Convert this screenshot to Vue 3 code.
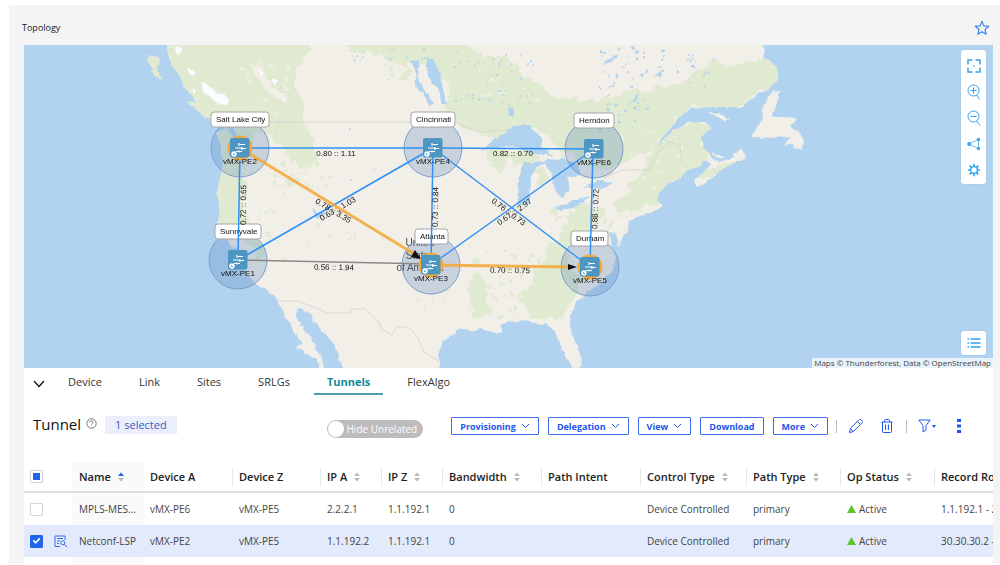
<script setup>
import { ref } from 'vue'

const tabs = ['Device', 'Link', 'Sites', 'SRLGs', 'Tunnels', 'FlexAlgo']
const activeTab = ref('Tunnels')
const hideUnrelated = ref(false)

const nodes = [
  { id: 'vMX-PE2', city: 'Salt Lake City', x: 240, y: 148, bx: 211, by: 112, bw: 58, hot: true },
  { id: 'vMX-PE4', city: 'Cincinnati', x: 433, y: 148, bx: 411, by: 112, bw: 44, hot: false },
  { id: 'vMX-PE6', city: 'Herndon', x: 594, y: 149, bx: 574, by: 113, bw: 40, hot: false },
  { id: 'vMX-PE1', city: 'Sunnyvale', x: 238, y: 260, bx: 215, by: 224, bw: 46, hot: false },
  { id: 'vMX-PE3', city: 'Atlanta', x: 431, y: 265, bx: 415, by: 229, bw: 33, hot: true },
  { id: 'vMX-PE5', city: 'Durham', x: 590, y: 267, bx: 571, by: 231, bw: 37, hot: true }
]

const links = [
  [240, 148, 433, 148], [433, 148, 594, 149], [240, 148, 238, 260], [238, 260, 433, 148],
  [433, 148, 431, 265], [433, 148, 590, 267], [431, 265, 594, 149], [593, 149, 590, 267]
]

const metrics = [
  { t: '0.80 :: 1.11', x: 336, y: 156, r: 0 },
  { t: '0.82 :: 0.70', x: 513, y: 156, r: 0 },
  { t: '0.56 :: 1.94', x: 334, y: 270, r: 1 },
  { t: '0.70 :: 0.75', x: 510, y: 273, r: 1 },
  { t: '0.72 :: 0.65', x: 246, y: 205, r: -89 },
  { t: '0.73 :: 0.84', x: 438, y: 207, r: -89 },
  { t: '0.88 :: 0.72', x: 598, y: 209, r: -88 },
  { t: '0.78 :: 3.35', x: 332, y: 213, r: 31 },
  { t: '0.63 :: 1.03', x: 339, y: 211, r: -30 },
  { t: '0.76 :: 0.73', x: 507, y: 214, r: 37 },
  { t: '0.67 :: 2.97', x: 516, y: 214, r: -35 }
]

// Small lakes and forest patches, scattered with a fixed seed
function scatter(seed, count, x0, y0, x1, y1, max) {
  let s = seed
  const next = () => {
    s = (s * 16807) % 2147483647
    return s / 2147483647
  }
  return Array.from({ length: count }, () => ({
    x: Math.round(x0 + next() * (x1 - x0)),
    y: Math.round(y0 + next() * (y1 - y0)),
    rx: (0.4 + next() * max).toFixed(1),
    ry: (0.4 + next() * max * 0.6).toFixed(1),
    a: Math.round(next() * 180)
  }))
}
const lakes = [
  ...scatter(71, 50, 455, 48, 535, 105, 1.2),
  ...scatter(913, 60, 600, 48, 715, 88, 2),
  ...scatter(37, 30, 600, 95, 655, 135, 1.5),
  ...scatter(55, 16, 350, 48, 425, 62, 1.2),
  ...scatter(85, 10, 275, 120, 400, 180, 1)
]
const groves = [
  ...scatter(17, 34, 240, 160, 290, 260, 2.5),
  ...scatter(29, 40, 275, 150, 345, 190, 3),
  ...scatter(43, 22, 310, 220, 385, 255, 2.5),
  ...scatter(23, 14, 360, 285, 465, 310, 2),
  ...scatter(7, 70, 470, 245, 570, 318, 4),
  ...scatter(97, 34, 550, 200, 640, 245, 4),
  ...scatter(61, 18, 385, 65, 430, 80, 3)
]
const clearings = [
  ...scatter(15, 40, 235, 60, 290, 130, 2.5),
  ...scatter(19, 30, 470, 60, 540, 100, 2),
  ...scatter(33, 30, 620, 130, 700, 190, 2)
]

const actions = [
  { label: 'Provisioning', menu: true },
  { label: 'Delegation', menu: true },
  { label: 'View', menu: true },
  { label: 'Download', menu: false },
  { label: 'More', menu: true }
]

const columns = [
  { label: 'Name', sort: 'asc', cls: 'name' },
  { label: 'Device A', cls: 'dev plain' },
  { label: 'Device Z', cls: 'dev' },
  { label: 'IP A', sort: 'none', cls: 'ip' },
  { label: 'IP Z', sort: 'none', cls: 'ip' },
  { label: 'Bandwidth', sort: 'none', cls: 'wide' },
  { label: 'Path Intent', cls: 'wide' },
  { label: 'Control Type', sort: 'none', cls: 'control' },
  { label: 'Path Type', sort: 'none', cls: 'type' },
  { label: 'Op Status', sort: 'none', cls: 'type' },
  { label: 'Record Route', cls: 'record' }
]

const rows = ref([
  { on: false, cells: ['MPLS-MES...', 'vMX-PE6', 'vMX-PE5', '2.2.2.1', '1.1.192.1', '0', '', 'Device Controlled', 'primary', 'Active', '1.1.192.1 - 2.2.2.1'] },
  { on: true, cells: ['Netconf-LSP', 'vMX-PE2', 'vMX-PE5', '1.1.192.2', '1.1.192.1', '0', '', 'Device Controlled', 'primary', 'Active', '30.30.30.2 - 1.1.192.1'] }
])
</script>

<template>
  <main class="page">
    <header class="head">
      <h1>Topology</h1>
      <button class="bare" aria-label="Favorite">
        <svg width="16" height="16" viewBox="0 0 16 16"><path d="M8 1.200L9.900 5.900 14.800 6.300 11 9.500 12.200 14.300 8 11.700 3.800 14.300 5 9.500 1.200 6.300 6.100 5.900Z" fill="none" stroke="#2d83f0" stroke-width="1.1" stroke-linejoin="round" /></svg>
      </button>
    </header>

    <section class="map" aria-label="Network map">
      <svg class="chart" viewBox="24 45 969 323">
        <defs>
          <filter id="rough" x="-5%" y="-5%" width="110%" height="110%">
            <feTurbulence type="fractalNoise" baseFrequency="0.14" numOctaves="3" seed="4" />
            <feDisplacementMap in="SourceGraphic" scale="5" xChannelSelector="R" yChannelSelector="G" />
          </filter>
          <filter id="rougher" x="-5%" y="-5%" width="110%" height="110%">
            <feTurbulence type="fractalNoise" baseFrequency="0.09" numOctaves="4" seed="9" />
            <feDisplacementMap in="SourceGraphic" scale="16" xChannelSelector="R" yChannelSelector="G" />
          </filter>
          <path id="continent" d="M166 36L168 54 172 66 179 75 185 88 194 98 201 107 212 115 220 122 226 130 217 133 222 150 223 163 220 180 218 197 220 213 219 222 224 234 231 246 238 260 247 273 253 283 263 287 273 295 278 302 283 313 290 323 294 333 303 342 297 348 307 353 317 360 322 376H325L322 358 315 348 312 338 303 328 296 316 297 309 309 312 314 323 325 333 334 345 339 358 347 376H442L438 353 441 343 449 338 460 328 470 331 480 328 490 332 503 333 500 326 507 322 527 320 537 325 547 323 555 333 560 341 562 350 568 359 572 369H580L581 358 577 346 571 333 570 320 573 307 583 295 597 287 605 277 612 272 616 257 612 247 610 233 614 231 618 247 623 237 629 227 630 220 643 215 660 208 663 207 657 200 659 193 667 185 680 178 687 170 700 167 704 160 712 164 703 172 694 180 697 187 706 182 718 172 733 163 745 158 741 148 733 157 717 163 710 155 703 147 701 137 710 128 705 122 687 123 671 133 658 147 661 139 677 120 690 108 713 107 743 107 753 97 767 90 778 80 777 67 763 57 765 48 752 36H562V45L563 70 570 87 580 95 589 91 592 77 590 63 588 36Z" />
          <clipPath id="onland"><use href="#continent" /></clipPath>
        </defs>
        <rect x="24" y="45" width="969" height="323" fill="#b1d3f0" />
        <g filter="url(#rough)" fill="#f2efe9">
          <use href="#continent" />
          <path d="M780 92L773 90 763 107 762 118 752 137 776 138 790 136 784 146 792 143 794 147 802 150 804 142 800 132 790 127 796 119 784 117 772 117 776 106Z" />
          <path d="M708 112L719 113 730 120 722 120ZM711 151L718 156 726 156 717 159Z" />
          <path d="M187 100L200 103 213 113 219 124 207 119 197 111Z" fill="#dfead0" />
          <path d="M147 55L160 57 157 67 164 82 155 76 150 66Z" fill="#dfead0" />
        </g>
        <g clip-path="url(#onland)">
          <g fill="#dfead0" filter="url(#rougher)">
            <path d="M160 30H318L298 66 293 88 304 104 302 124 314 140 318 160 302 170 288 156 270 136 256 132 246 156 240 200 250 224 266 252 258 258 244 238 230 225 212 226 208 132 185 105Z" />
            <path d="M335 30H425L450 36 480 54 510 60 535 84 560 98 600 100 640 90 680 84 712 62 740 66 770 52 784 80 755 97 740 108 692 108 664 138 645 152 618 166 600 170 560 150 540 130 512 128 500 140 470 130 448 114 446 82 425 62 398 64 382 56 352 50Z" />
            <path d="M658 130L690 120 715 128 702 145 710 164 690 172 668 185 657 202 635 212 610 212 625 192 645 170ZM696 178L722 164 747 155 712 178ZM488 148L540 154 528 166 510 158 500 172 486 160ZM534 170L544 166 550 182 538 184Z" />
            <path d="M548 250L580 205 606 208 586 236 566 258 584 280 572 300 560 318 530 318 520 300 535 275ZM470 274L485 276 484 300 492 314 475 318Z" />
          </g>
          <g fill="#dfead0" filter="url(#rough)">
            <ellipse v-for="(g, i) in groves" :key="i" :cx="g.x" :cy="g.y" :rx="g.rx" :ry="g.ry" :transform="`rotate(${g.a} ${g.x} ${g.y})`" />
          </g>
          <g fill="#f2efe9" filter="url(#rough)">
            <ellipse v-for="(g, i) in clearings" :key="i" :cx="g.x" :cy="g.y" :rx="g.rx" :ry="g.ry" :transform="`rotate(${g.a} ${g.x} ${g.y})`" />
            <path d="M250 64L262 68 272 86 284 94 288 104 276 98 266 90 256 76Z" />
          </g>
          <g fill="#fafcff" filter="url(#rough)">
            <path d="M174 46L182 48 181 54 177 53ZM188 68L196 72 194 76 189 74ZM202 82L210 86 214 92 222 94 229 99 227 105 217 103 208 96 203 92ZM258 70L263 74 261 77ZM270 80L277 80 275 84ZM192 88L196 91 194 94Z" />
          </g>
        </g>
        <path d="M270 122H455M278 301L298 301 328 313H350L351 309H365L378 321 382 329 392 335 397 327H408L416 335 424 352 440 362M455 122L466 127 480 132 492 131 510 130 530 142M604 178L622 170H650L658 152 670 142 680 146 682 162 687 167" fill="none" stroke="#dad5d1" />
        <g fill="#b1d3f0" filter="url(#rough)">
          <path d="M482 150L492 141 503 134 512 126 530 125 540 137 543 147 553 156 534 154 520 149 508 145 498 148Z" />
          <path d="M517 206L518 179 524 163 551 161 536 168 530 181 529 203Z" />
          <path d="M545 160L565 158 578 165 581 175 566 177 570 190 562 199 555 190 551 174Z" />
          <path d="M555 207L567 203 592 195 577 206 561 211ZM583 188L597 181 613 182 604 188Z" />
          <path d="M426 57L434 59 441 74 442 84 446 104 441 104 440 92 430 80 426 66ZM411 60L419 62 418 78 424 88 434 104 430 107 424 94 415 86 417 76Z" />
          <path d="M312 207L318 212 326 214 321 218 315 216ZM508 106L514 108 514 116 509 116ZM630 104L640 92 638 100ZM652 76L664 70 662 76ZM602 62L622 54 608 64Z" />
          <path d="M228 120L234 128 238 140 233 136 226 126ZM228 246L236 248 240 253 232 252ZM610 232L614 238 613 248Z" />
        </g>
        <path d="M566 70L575 69 576 72 569 74Z" fill="#f2efe9" />
        <g fill="#b1d3f0">
          <ellipse v-for="(l, i) in lakes" :key="i" :cx="l.x" :cy="l.y" :rx="l.rx" :ry="l.ry" :transform="`rotate(${l.a} ${l.x} ${l.y})`" />
        </g>

        <g class="country" text-anchor="middle">
          <text x="420" y="246">United</text>
          <text x="420" y="259">States</text>
          <text x="420" y="271">of America</text>
        </g>

        <g v-for="n in nodes" :key="n.id">
          <circle :cx="n.x" :cy="n.y" r="29" fill="#4a7db8" fill-opacity=".25" stroke="#7e9dc7" stroke-width="1" />
          <rect :x="n.bx" :y="n.by" :width="n.bw" height="15" rx="3" fill="#fff" stroke="#a6a6a6" stroke-width="1" />
          <text class="city" :x="n.bx + 5" :y="n.by + 10">{{ n.city }}</text>
        </g>

        <line x1="238" y1="260" x2="431" y2="264" stroke="#8b8785" stroke-width="1.3" />
        <line v-for="(l, i) in links" :key="i" :x1="l[0]" :y1="l[1]" :x2="l[2]" :y2="l[3]" stroke="#2f90f5" stroke-width="1.5" />
        <g class="metric" text-anchor="middle">
          <text v-for="m in metrics" :key="m.t" :x="m.x" :y="m.y" :transform="`rotate(${m.r} ${m.x} ${m.y})`">{{ m.t }}</text>
        </g>
        <g stroke="#f4a93a" stroke-opacity=".88" stroke-width="3">
          <line x1="240" y1="148" x2="416" y2="255" />
          <line x1="431" y1="265" x2="570" y2="267" />
        </g>
        <path d="M421 259L411 257 415 250ZM577 267L568 264V270Z" fill="#111" />

        <g v-for="n in nodes" :key="n.city">
          <circle v-if="n.hot" :cx="n.x" :cy="n.y" r="12.5" fill="#f2a93c" />
          <g :transform="`translate(${n.x} ${n.y})`">
            <rect x="-10" y="-10" width="19.5" height="19.5" rx="2" fill="#4c96c1" />
            <path d="M-5 0H2M0 -3.500H5M-4 3.500H2M1 .5H6M-1 -5V-2M2 -1V2M-1 2.500V4.500" fill="none" stroke="#fff" stroke-width="1.200" />
            <circle cx="-6" cy="6" r="2.700" fill="#fff" />
            <path d="M-6.500 5V6.500H-5" fill="none" stroke="#4c96c1" stroke-width=".8" />
          </g>
          <text class="metric" text-anchor="middle" :x="n.x" :y="n.y + 16">{{ n.id }}</text>
        </g>
      </svg>

      <nav class="tools" aria-label="Map tools">
        <button class="bare" aria-label="Fit to screen">
          <svg width="14" height="14" viewBox="0 0 14 14"><path d="M1 5.500V1H5.500M8.500 1H13V5.500M13 8.500V13H8.500M5.500 13H1V8.500" stroke-width="1.500" /><circle cx="7" cy="7" r=".8" fill="#31a2ee" stroke="none" /></svg>
        </button>
        <button class="bare" aria-label="Zoom in">
          <svg width="14" height="16" viewBox="0 0 14 16"><circle cx="6.500" cy="6.500" r="5.500" /><path d="M3.500 6.500H9.500M6.500 3.500V9.500M9.500 11L13 15.500" /></svg>
        </button>
        <button class="bare" aria-label="Zoom out">
          <svg width="14" height="16" viewBox="0 0 14 16"><circle cx="6.500" cy="6.500" r="5.500" /><path d="M3.500 6.500H9.500M9.500 11L13 15.500" /></svg>
        </button>
        <button class="bare" aria-label="Layout">
          <svg width="14" height="14" viewBox="0 0 14 14"><path d="M2 7L11.500 2.500V11.500Z" stroke-width=".7" /><g fill="#31a2ee" stroke="none"><circle cx="2.200" cy="7" r="2" /><circle cx="11.500" cy="2.500" r="1.700" /><circle cx="11.500" cy="11.500" r="1.700" /></g></svg>
        </button>
        <button class="bare" aria-label="Map settings">
          <svg width="14" height="14" viewBox="0 0 14 14"><circle cx="7" cy="7" r="3.400" stroke-width="1.400" /><path d="M7 .8V3.500M7 10.500V13.200M.8 7H3.500M10.500 7H13.200M2.600 2.600L4.500 4.500M9.500 9.500L11.400 11.400M2.600 11.400L4.500 9.500M9.500 4.500L11.400 2.600" stroke-width="1.700" /></svg>
        </button>
      </nav>
      <button class="bare legend" aria-label="Legend">
        <svg width="14" height="12" viewBox="0 0 14 12"><path d="M3.500 2H13.500M3.500 6H13.500M3.500 10H13.500M.5 2H2M.5 6H2M.5 10H2" stroke-width="1.300" /></svg>
      </button>
      <p class="credit">Maps © Thunderforest, Data © OpenStreetMap</p>
    </section>

    <section class="panel">
      <nav class="tabs">
        <button class="bare collapse" aria-label="Collapse panel">
          <svg width="12" height="8" viewBox="0 0 12 8"><path d="M1 1L6 6.500 11 1" fill="none" stroke="#111" stroke-width="1.300" /></svg>
        </button>
        <button v-for="t in tabs" :key="t" class="bare tab" :class="{ active: t === activeTab }" @click="activeTab = t">{{ t }}</button>
      </nav>

      <div class="bar">
        <div class="heading">
          <h2>Tunnel</h2>
          <svg class="help" width="11" height="11" viewBox="0 0 11 11"><circle cx="5.500" cy="5.500" r="4.700" /><path d="M4 4.300C4 2.300 7 2.400 7 4.200 7 5.300 5.500 5.200 5.500 6.500M5.500 7.500V8.300" /></svg>
          <span class="badge">1 selected</span>
        </div>
        <label class="switch"><input v-model="hideUnrelated" type="checkbox" role="switch"><span>Hide Unrelated</span></label>
        <div class="actions">
          <button v-for="a in actions" :key="a.label" class="action">
            {{ a.label }}
            <svg v-if="a.menu" width="9" height="6" viewBox="0 0 9 6"><path d="M1 1L4.500 4.500 8 1" /></svg>
          </button>
        </div>
        <i class="rule"></i>
        <button class="bare" aria-label="Edit">
          <svg width="16" height="16" viewBox="0 0 16 16"><path d="M1.500 14.500L2.300 10.500 10.800 2C12.500.4 15.500 3.300 13.900 5L5.300 13.600ZM9.300 3.500L12.300 6.500M2.500 10.500L5.300 13.500" /></svg>
        </button>
        <button class="bare trash" aria-label="Delete">
          <svg width="12" height="16" viewBox="0 0 12 16"><path d="M.5 4H11.500M1.500 4V13.500Q1.500 14.500 2.500 14.500H9.500Q10.500 14.500 10.500 13.500V4M3.500 4V2.500Q3.500 1.500 4.500 1.500H7.500Q8.500 1.500 8.500 2.500V4M4.600 6.500V12M7.400 6.500V12" /></svg>
        </button>
        <i class="rule"></i>
        <button class="bare filter" aria-label="Filter">
          <svg width="18" height="14" viewBox="0 0 18 14"><path d="M.8 1H12.200L8 6.500V11L5 13V6.500Z" /><path d="M14 6H18L16 9Z" fill="#1d56ee" stroke="none" /></svg>
        </button>
        <button class="bare dots" aria-label="More options">
          <svg width="4" height="16" viewBox="0 0 4 16"><path d="M0 1H4V4H0ZM0 6.500H4V9.500H0ZM0 12H4V15H0Z" fill="#1d56ee" stroke="none" /></svg>
        </button>
      </div>

      <div class="scroller">
        <table>
          <thead>
            <tr>
              <th class="pick"><input type="checkbox" :indeterminate="true" aria-label="Select all"></th>
              <th class="open"></th>
              <th v-for="c in columns" :key="c.label" :class="c.cls">
                <span class="title">{{ c.label }}
                  <button v-if="c.sort" class="bare" :aria-label="'Sort by ' + c.label">
                    <svg width="6" height="10" viewBox="0 0 6 10"><path d="M0 4L3 .5 6 4Z" :fill="c.sort === 'asc' ? '#1f66ee' : '#b9b9b9'" /><path d="M0 6L3 9.500 6 6Z" fill="#b9b9b9" /></svg>
                  </button>
                </span>
              </th>
            </tr>
          </thead>
          <tbody>
            <tr v-for="r in rows" :key="r.cells[0]" :class="{ on: r.on }">
              <td class="pick"><input v-model="r.on" type="checkbox" :aria-label="'Select ' + r.cells[0]"></td>
              <td class="open">
                <button v-if="r.on" class="bare" aria-label="Show details">
                  <svg width="14" height="13" viewBox="0 0 14 13"><path d="M6 11.500H1V1H11V5M3 3.500H9M3 6H6M3 8.500H5" /><circle cx="8.800" cy="7.800" r="2" /><path d="M10.300 9.300L13 12" /></svg>
                </button>
              </td>
              <td v-for="(c, i) in r.cells" :key="i" :class="columns[i].cls">
                <svg v-if="i === 9" class="up" width="9" height="8" viewBox="0 0 9 8"><path d="M0 8L4.500 0 9 8Z" fill="#5cc52d" /></svg>{{ c }}
              </td>
            </tr>
            <tr>
              <td class="pick"></td><td class="open"></td>
              <td v-for="c in columns" :key="c.label" :class="c.cls"></td>
            </tr>
          </tbody>
        </table>
      </div>
    </section>
  </main>
</template>

<style>
body { background: #fff; overflow: hidden; }
#app { padding: 5px 0 2px 9px; }
</style>

<style scoped>
.page {
  box-sizing: border-box;
  height: calc(100vh - 7px);
  overflow: hidden;
  padding: 0 7px 0 15px;
  background: #f4f4f4;
  font-family: "Open Sans", "Noto Sans", sans-serif;
  color: #222;
}
.bare { display: inline-flex; align-items: center; justify-content: center; padding: 0; border: 0; background: none; font: inherit; color: inherit; cursor: pointer; }
.head { display: flex; align-items: center; justify-content: space-between; height: 40px; padding: 2px 3px 0 0; margin-left: -2px; box-sizing: border-box; }
.head h1 { margin: 0; padding-top: 3px; font-size: 9px; font-weight: 400; }
.head .bare { padding-top: 3px; }

.map { position: relative; }
.chart { display: block; width: 100%; height: auto; font-family: "Liberation Sans", Arial, sans-serif; }
.city, .metric { font-size: 8px; fill: #111; }
.country { font-size: 10px; fill: #444; }
.tools, .legend { position: absolute; right: 7px; width: 25px; border-radius: 3px; background: #fff; box-shadow: 0 0 2px #8ba4bc66; }
.tools { top: 5px; box-sizing: border-box; padding: 3px 0 1px; display: grid; grid-auto-rows: 26px; }
.legend { bottom: 13px; height: 24px; }
.tools svg, .legend svg { fill: none; stroke: #31a2ee; }
.credit { position: absolute; right: 0; bottom: 0; margin: 0; padding: 0 2px; background: #ffffffb3; font-size: 8px; line-height: 10px; color: #444; }

.panel { background: #fff; }
.tabs { display: flex; align-items: center; gap: 11px; height: 27px; padding-left: 9px; }
.collapse { padding-top: 4px; }
.tab { height: 27px; box-sizing: border-box; padding: 2px 13px 0; border-bottom: 2px solid transparent; font-size: 11px; color: #333; }
.collapse + .tab { margin-left: -1px; }
.tab.active { border-bottom-color: #4b9fae; font-weight: 700; color: #128a9b; }

.bar { display: flex; align-items: center; height: 67px; padding: 0 32px 5px 9px; box-sizing: border-box; }
.bar svg { fill: none; stroke: #1d56ee; }
.heading { display: flex; align-items: center; margin-right: auto; padding-bottom: 3px; }
.bar h2 { margin: 0 5px 0 0; padding-bottom: 2px; font-size: 15px; font-weight: 500; color: #111; }
.bar .help { stroke: #555; stroke-width: .8; margin-bottom: 2px; }
.badge { margin-left: 8px; padding: 0 10px; background: #ebeffc; font-size: 11px; line-height: 18px; color: #3d5bc4; }
.switch { display: flex; align-items: center; gap: 3px; height: 18px; padding: 0 6px 0 1px; margin: 5px 28px 0 0; border-radius: 9px; background: #bcbcbc; box-sizing: border-box; font-size: 10px; font-weight: 500; color: #fff; }
.switch input { appearance: none; width: 16px; height: 16px; margin: 0; border-radius: 50%; background: #fff; }
.actions { display: flex; gap: 9px; margin-right: 8px; }
.action { display: flex; align-items: center; gap: 5px; height: 18px; padding: 0 8px; border: 1px solid #3f6df0; border-radius: 1px; background: #fff; font: 700 9px "Open Sans", sans-serif; color: #1d56ee; }
.rule { width: 1px; height: 13px; background: #bbb; }
.rule + .bare { margin-left: 11px; }
.bar .trash { margin: 0 13px 0 17px; }
.dots { margin-left: 21px; }

.scroller { overflow: hidden; }
table { width: 1030px; table-layout: fixed; border-collapse: separate; border-spacing: 0; font-size: 10px; color: #444; }
th, td { box-sizing: border-box; padding: 0 0 0 7px; text-align: left; white-space: nowrap; overflow: hidden; }
th { height: 31px; border-bottom: 2px solid #dedede; font-size: 11px; font-weight: 600; color: #222; }
td { height: 32px; }
.pick { width: 24px; padding-left: 6px; }
.open { width: 24px; padding-left: 6px; }
.name { width: 72px; background: #fafafa; }
.dev { width: 88px; }
.ip { width: 61px; }
.wide { width: 99px; }
.control { width: 106px; }
.type { width: 94px; }
.record { width: 120px; }
.title { display: flex; align-items: center; gap: 7px; height: 18px; margin-left: -7px; padding-left: 6px; border-left: 1px solid #e8e8e8; }
.name .title { padding-left: 6px; }
.dev, .ip, .wide, .control, .type, .record { padding-left: 7px; }
td.plain { padding-left: 6px; }
th.plain { padding-left: 6px; }
.name .title, .plain .title { border-left-color: transparent; }
.on td { background: #e3eafb; }
.up { margin-right: 3px; vertical-align: 0; }
.open svg { display: block; fill: none; stroke: #356bea; }
.open .bare { vertical-align: middle; }
.pick input { appearance: none; display: grid; place-content: center; width: 13px; height: 13px; margin: 0; border: 1px solid #d5d5d5; border-radius: 1px; background: #fff; }
.pick input::before { content: ""; width: 7px; height: 7px; }
.pick input:indeterminate::before { background: #1f66ee; }
.pick input:checked { border-color: #1f66ee; background: #1f66ee; }
.pick input:checked::before { width: 9px; height: 9px; background: #fff; clip-path: polygon(8% 50%, 22% 36%, 40% 56%, 80% 14%, 94% 28%, 40% 84%); }
</style>
